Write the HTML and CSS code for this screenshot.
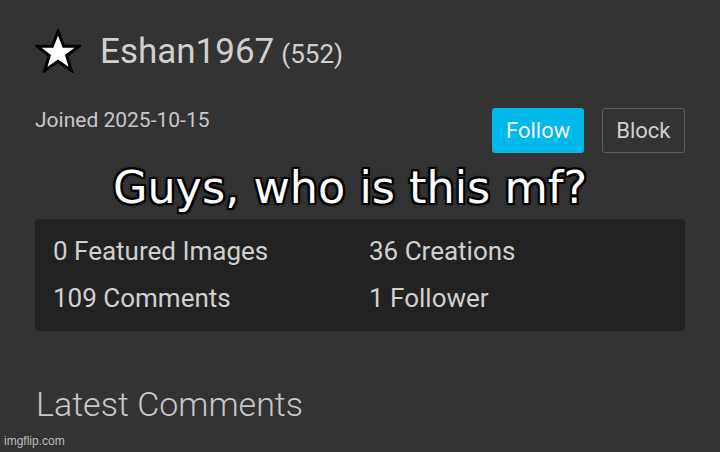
FILE: index.html
```html
<!DOCTYPE html>
<html>
<head>
<meta charset="utf-8">
<link rel="stylesheet" href="styles.css">
</head>
<body>
<div class="page">
  <div class="header">
    <svg class="star" width="46" height="44" viewBox="0 0 46 44">
      <polygon points="23,2.5 28.7,17.2 44,17.2 31.7,26.6 36.3,41.5 23,32.3 9.7,41.5 14.3,26.6 2,17.2 17.3,17.2" fill="#fff" stroke="#000" stroke-width="3" stroke-linejoin="miter"/>
    </svg>
    <span class="name">Eshan1967</span>
    <span class="points">(552)</span>
  </div>
  <div class="meta">
    <div class="joined">Joined 2025-10-15</div>
    <div class="actions">
      <button class="btn follow">Follow</button>
      <button class="btn block">Block</button>
    </div>
  </div>
  <div class="caption">Guys, who is this mf?</div>
  <div class="stats">
    <div class="stat">0 Featured Images</div>
    <div class="stat">36 Creations</div>
    <div class="stat">109 Comments</div>
    <div class="stat">1 Follower</div>
  </div>
  <h2 class="latest">Latest Comments</h2>
</div>
<div class="watermark">imgflip.com</div>
</body>
</html>
```
FILE: styles.css
```css
html, body {
  margin: 0;
  padding: 0;
  background: #333333;
  width: 720px;
  height: 452px;
  overflow: hidden;
  font-family: Roboto, "Liberation Sans", sans-serif;
}
.page {
  padding: 28px 35px 0 35px;
}
.header {
  display: flex;
  align-items: center;
  height: 46px;
}
.star {
  margin-right: 19px;
}
.name {
  font-size: 35px;
  color: #cfcfcf;
}
.points {
  font-size: 26px;
  color: #cfcfcf;
  margin-left: 7px;
  margin-top: 6px;
}
.meta {
  display: flex;
  justify-content: space-between;
  align-items: flex-start;
  margin-top: 34px;
  height: 45px;
}
.joined {
  font-size: 21px;
  line-height: 24px;
  color: #c8c8c8;
}
.actions {
  display: flex;
  gap: 18px;
}
.btn {
  font-family: Roboto, sans-serif;
  font-size: 22px;
  height: 45px;
  border-radius: 3px;
  padding: 0 13.5px;
}
.follow {
  background: #00b8ea;
  color: #f0f8fc;
  border: none;
}
.block {
  background: transparent;
  color: #cfcfcf;
  border: 1px solid #5e5e5e;
}
.caption {
  text-align: center;
  font-family: "DejaVu Sans", sans-serif;
  font-size: 44.5px;
  line-height: 50px;
  color: #fff;
  margin-top: 10px;
  padding-right: 20px;
  text-shadow: -2px -2px 0 #000, 2px -2px 0 #000, -2px 2px 0 #000, 2px 2px 0 #000, 0 2px 0 #000, 0 -2px 0 #000, 2px 0 0 #000, -2px 0 0 #000, 0 0 4px #000;
}
.stats {
  margin-top: 6px;
  background: #222222;
  border-radius: 4px;
  display: grid;
  grid-template-columns: 316px 1fr;
  grid-auto-rows: 30px;
  row-gap: 17px;
  padding: 17px 18px 18px 18px;
}
.stat {
  font-size: 26px;
  color: #d0d0d0;
  line-height: 30px;
}
.latest {
  margin: 53px 0 0 1px;
  font-size: 34px;
  line-height: 40px;
  font-weight: 300;
  color: #c8c8c8;
}
.watermark {
  position: absolute;
  left: 4px;
  top: 434px;
  font-size: 12px;
  color: #bdbdbd;
  font-family: "Liberation Sans", sans-serif;
}
```
